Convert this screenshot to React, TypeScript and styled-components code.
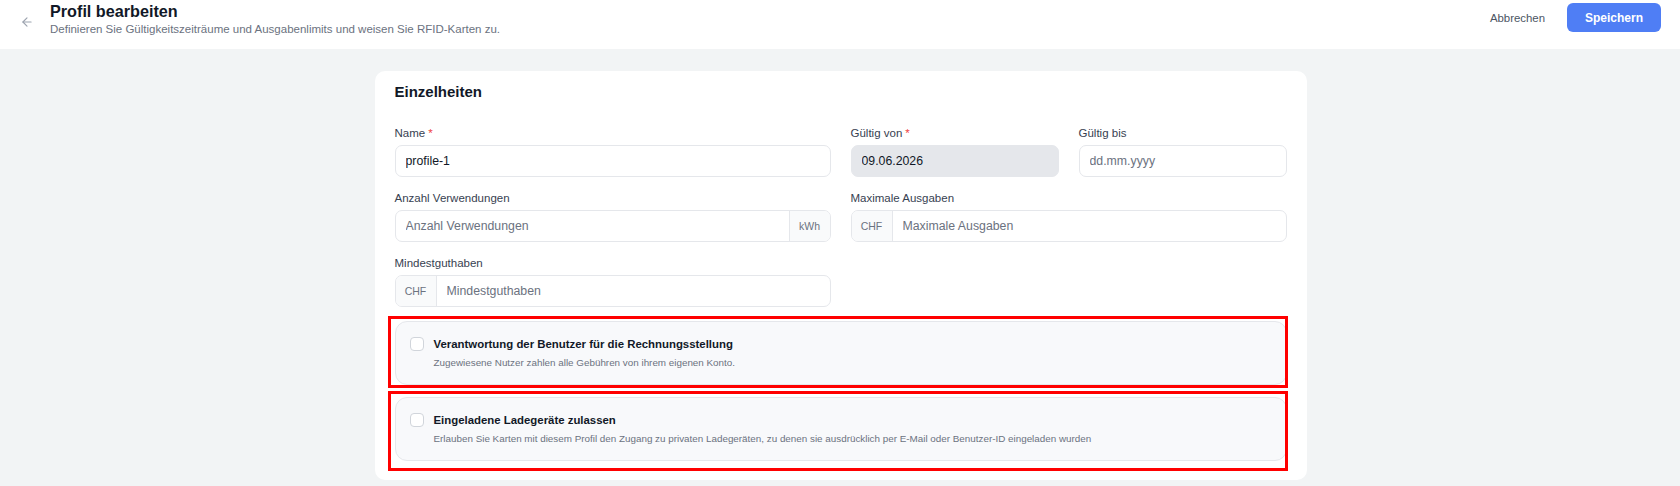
import styled, { createGlobalStyle } from "styled-components";

const GlobalStyle = createGlobalStyle`
  html, body {
    margin: 0;
    padding: 0;
    background: #f2f4f5;
    font-family: "Liberation Sans", Arial, Helvetica, sans-serif;
    color: #111827;
  }
  * { box-sizing: border-box; }
`;

const Header = styled.header`
  display: flex;
  align-items: flex-start;
  justify-content: space-between;
  height: 49px;
  background: #ffffff;
  padding: 3px 19px 0 20px;
`;

const HeaderLeft = styled.div`
  display: flex;
  align-items: flex-start;
  gap: 16px;
`;

const BackButton = styled.button`
  border: none;
  background: none;
  padding: 0;
  margin-top: 12px;
  display: flex;
  color: #9ca3af;
  cursor: pointer;
`;

const TitleBlock = styled.div`
  display: flex;
  flex-direction: column;
`;

const PageTitle = styled.h1`
  margin: 0;
  font-size: 16.2px;
  line-height: 16px;
  font-weight: 700;
  color: #111827;
`;

const PageSubtitle = styled.p`
  margin: 3px 0 0;
  font-size: 11.5px;
  line-height: 14px;
  color: #6b7280;
`;

const Actions = styled.div`
  display: flex;
  align-items: center;
  gap: 22px;
`;

const GhostButton = styled.button`
  border: none;
  background: none;
  font-family: inherit;
  font-size: 11.4px;
  color: #4b5563;
  padding: 0;
  cursor: pointer;
`;

const PrimaryButton = styled.button`
  border: none;
  background: #4f7ef5;
  color: #ffffff;
  font-family: inherit;
  font-size: 12px;
  font-weight: 700;
  width: 94px;
  height: 29px;
  border-radius: 6px;
  cursor: pointer;
`;

const Main = styled.main`
  display: flex;
  justify-content: center;
  padding: 22px 0 8px;
`;

const Card = styled.section`
  width: 932px;
  margin-left: 1px;
  background: #ffffff;
  border-radius: 10px;
  padding: 9px 20px 19px;
`;

const CardTitle = styled.h2`
  margin: 0 0 20px;
  font-size: 15px;
  line-height: 24px;
  font-weight: 700;
  color: #111827;
`;

const FormGrid = styled.div`
  display: grid;
  grid-template-columns: repeat(4, 1fr);
  column-gap: 20px;
  row-gap: 12px;
`;

const Field = styled.div<{ $span: number }>`
  grid-column: span ${(p) => p.$span};
  display: flex;
  flex-direction: column;
`;

const Label = styled.label`
  font-size: 11.5px;
  line-height: 18px;
  color: #374151;
  margin-bottom: 3px;
`;

const Required = styled.span`
  color: #ef4444;
  margin-left: 3px;
`;

const InputBox = styled.div<{ $disabled?: boolean }>`
  display: flex;
  height: 32px;
  border: 1px solid #e5e7eb;
  border-radius: 7px;
  background: ${(p) => (p.$disabled ? "#e5e7eb" : "#ffffff")};
  overflow: hidden;
`;

const Input = styled.input`
  flex: 1;
  min-width: 0;
  border: none;
  outline: none;
  background: transparent;
  padding: 0 10px;
  font-family: inherit;
  font-size: 12.3px;
  color: #111827;
  &::placeholder {
    color: #6b7280;
  }
  &:disabled {
    color: #111827;
  }
`;

const Addon = styled.span<{ $side: "left" | "right" }>`
  display: flex;
  align-items: center;
  justify-content: center;
  width: 41px;
  background: #f9fafb;
  font-size: 10.5px;
  color: #6b7280;
  ${(p) =>
    p.$side === "left"
      ? "border-right: 1px solid #e5e7eb;"
      : "border-left: 1px solid #e5e7eb;"}
`;

const Options = styled.div`
  display: flex;
  flex-direction: column;
  gap: 12px;
  margin-top: 14px;
`;

const OptionCard = styled.label`
  position: relative;
  display: flex;
  align-items: flex-start;
  gap: 10px;
  background: #f8f9fb;
  border: 1px solid #e5e7eb;
  border-radius: 12px;
  padding: 13px 14px;
  cursor: pointer;
`;

// red annotation frame drawn over each option in the screenshot
const Highlight = styled.span<{ $top: number; $bottom: number }>`
  position: absolute;
  left: -8px;
  right: -2px;
  top: ${(p) => p.$top}px;
  bottom: ${(p) => p.$bottom}px;
  border: 3px solid #ff0000;
  pointer-events: none;
`;

const Checkbox = styled.span`
  flex: none;
  width: 14px;
  height: 14px;
  margin-top: 2px;
  border: 1px solid #d1d5db;
  border-radius: 4px;
  background: #ffffff;
`;

const OptionText = styled.div`
  display: flex;
  flex-direction: column;
  gap: 2px;
`;

const OptionTitle = styled.span`
  font-size: 11.4px;
  line-height: 18px;
  font-weight: 700;
  color: #111827;
`;

const OptionDesc = styled.span`
  font-size: 9.85px;
  line-height: 16px;
  color: #6b7280;
`;

const options = [
  {
    title: "Verantwortung der Benutzer für die Rechnungsstellung",
    desc: "Zugewiesene Nutzer zahlen alle Gebühren von ihrem eigenen Konto.",
    frame: { top: -6, bottom: -4 },
  },
  {
    title: "Eingeladene Ladegeräte zulassen",
    desc: "Erlauben Sie Karten mit diesem Profil den Zugang zu privaten Ladegeräten, zu denen sie ausdrücklich per E-Mail oder Benutzer-ID eingeladen wurden",
    frame: { top: -7, bottom: -11 },
  },
];

export default function App() {
  return (
    <>
      <GlobalStyle />
      <Header>
        <HeaderLeft>
          <BackButton aria-label="Zurück">
            <svg width="14" height="14" viewBox="0 0 24 24" fill="none" stroke="currentColor" strokeWidth="2" strokeLinecap="round" strokeLinejoin="round">
              <path d="M19 12H5" />
              <path d="M12 19l-7-7 7-7" />
            </svg>
          </BackButton>
          <TitleBlock>
            <PageTitle>Profil bearbeiten</PageTitle>
            <PageSubtitle>
              Definieren Sie Gültigkeitszeiträume und Ausgabenlimits und weisen Sie RFID-Karten zu.
            </PageSubtitle>
          </TitleBlock>
        </HeaderLeft>
        <Actions>
          <GhostButton>Abbrechen</GhostButton>
          <PrimaryButton>Speichern</PrimaryButton>
        </Actions>
      </Header>
      <Main>
        <Card>
          <CardTitle>Einzelheiten</CardTitle>
          <FormGrid>
            <Field $span={2}>
              <Label>
                Name<Required>*</Required>
              </Label>
              <InputBox>
                <Input defaultValue="profile-1" />
              </InputBox>
            </Field>
            <Field $span={1}>
              <Label>
                Gültig von<Required>*</Required>
              </Label>
              <InputBox $disabled>
                <Input defaultValue="09.06.2026" disabled />
              </InputBox>
            </Field>
            <Field $span={1}>
              <Label>Gültig bis</Label>
              <InputBox>
                <Input placeholder="dd.mm.yyyy" />
              </InputBox>
            </Field>
            <Field $span={2}>
              <Label>Anzahl Verwendungen</Label>
              <InputBox>
                <Input placeholder="Anzahl Verwendungen" />
                <Addon $side="right">kWh</Addon>
              </InputBox>
            </Field>
            <Field $span={2}>
              <Label>Maximale Ausgaben</Label>
              <InputBox>
                <Addon $side="left">CHF</Addon>
                <Input placeholder="Maximale Ausgaben" />
              </InputBox>
            </Field>
            <Field $span={2}>
              <Label>Mindestguthaben</Label>
              <InputBox>
                <Addon $side="left">CHF</Addon>
                <Input placeholder="Mindestguthaben" />
              </InputBox>
            </Field>
          </FormGrid>
          <Options>
            {options.map((o) => (
              <OptionCard key={o.title}>
                <Highlight $top={o.frame.top} $bottom={o.frame.bottom} />
                <Checkbox />
                <OptionText>
                  <OptionTitle>{o.title}</OptionTitle>
                  <OptionDesc>{o.desc}</OptionDesc>
                </OptionText>
              </OptionCard>
            ))}
          </Options>
        </Card>
      </Main>
    </>
  );
}
